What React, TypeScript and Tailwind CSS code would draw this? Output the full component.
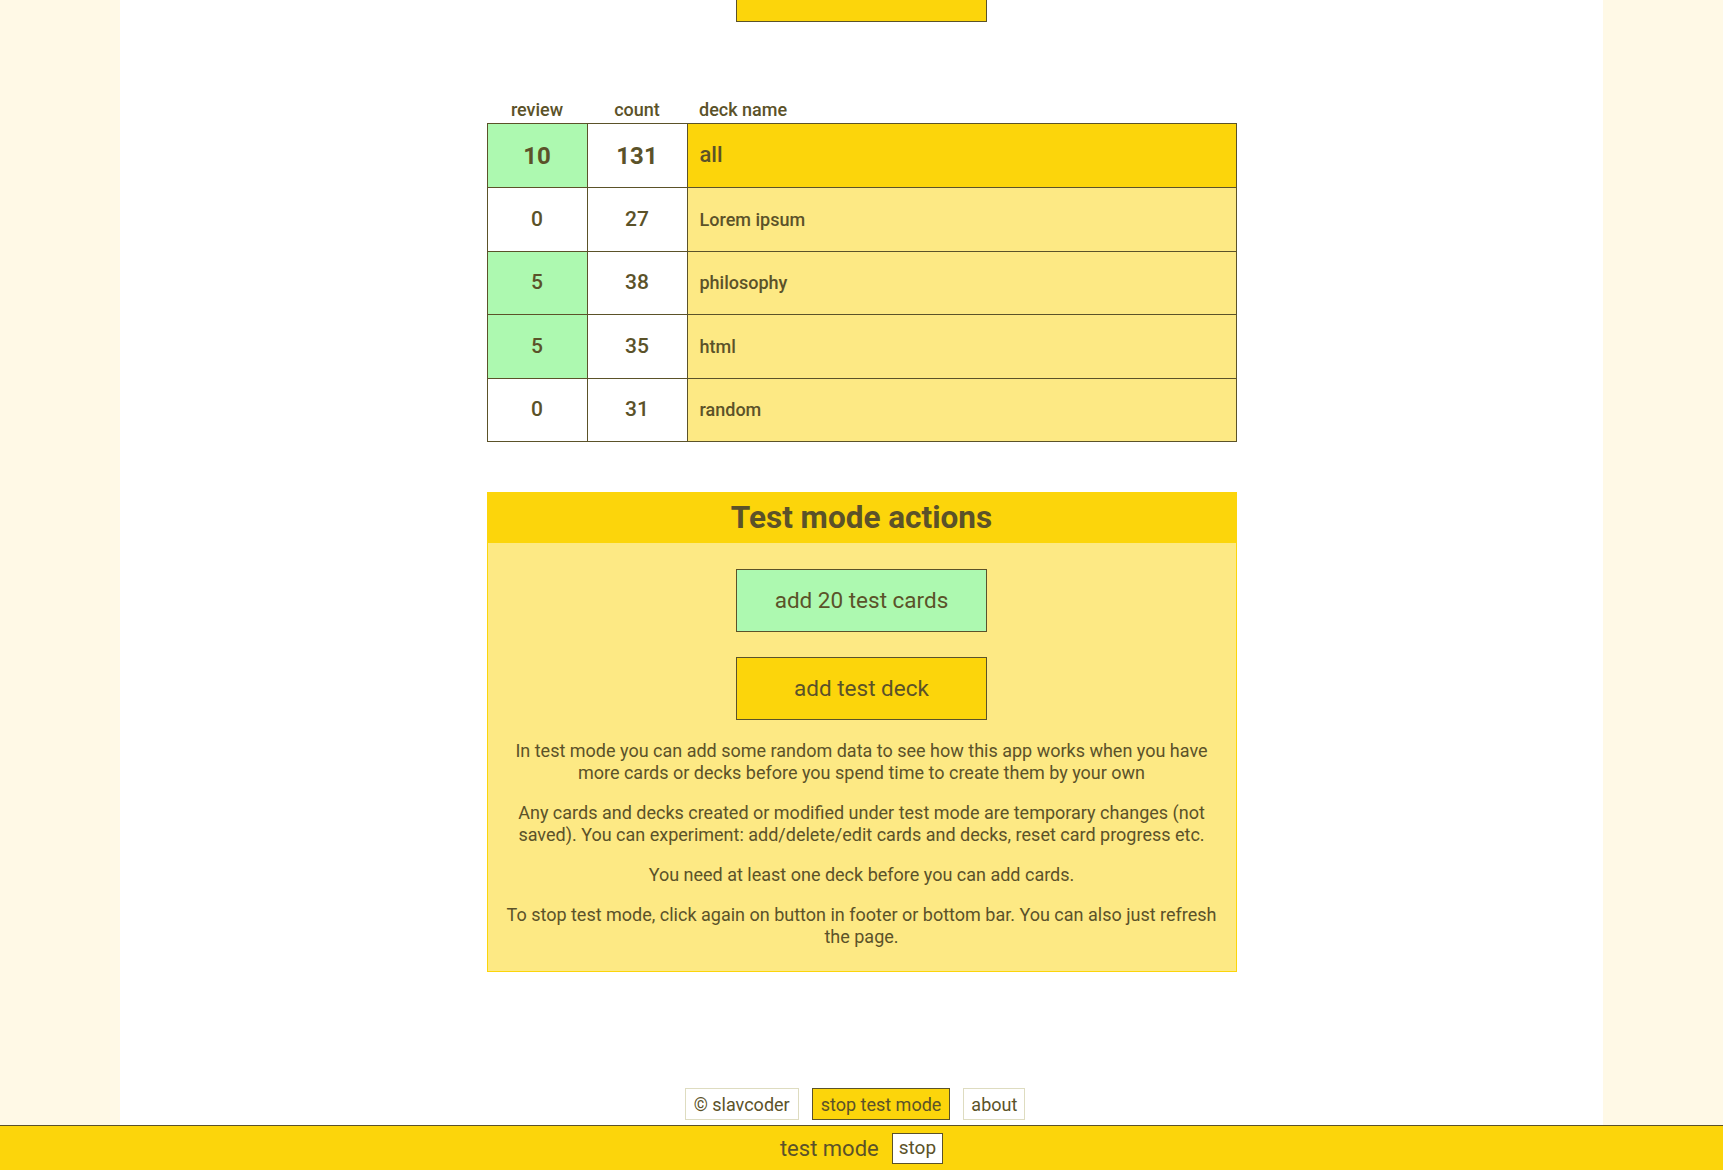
import React from "react";

const rows = [
  { review: 0, count: 27, name: "Lorem ipsum" },
  { review: 5, count: 38, name: "philosophy" },
  { review: 5, count: 35, name: "html" },
  { review: 0, count: 31, name: "random" },
];

export default function App() {
  return (
    <div
      className="min-h-screen flex flex-col bg-[#fff9e6] text-[#5b5229]"
      style={{ fontFamily: "Roboto, 'Noto Sans', sans-serif" }}
    >
      <div className="flex-1 w-[1483px] mx-auto bg-white flex flex-col items-center">
        <div className="w-[251px] h-[22px] bg-[#fcd50b] border-x border-b border-[#5b5229]" />

        <table className="mt-[74px] w-[750px] border-collapse">
          <thead>
            <tr className="h-[26px] text-[18px] font-medium">
              <th className="w-[100px] font-medium text-center align-middle">review</th>
              <th className="w-[100px] font-medium text-center align-middle">count</th>
              <th className="font-medium text-left pl-[12px] align-middle">deck name</th>
            </tr>
          </thead>
          <tbody>
            <tr className="h-[64px]">
              <td className="border border-[#5b5229] bg-[#adf9b0] text-center text-[24px] font-bold">10</td>
              <td className="border border-[#5b5229] bg-white text-center text-[24px] font-bold">131</td>
              <td className="border border-[#5b5229] bg-[#fcd50b] pl-[12px] pb-[2px] text-[22px] font-medium">all</td>
            </tr>
            {rows.map((r) => (
              <tr key={r.name} className="h-[63.5px]">
                <td
                  className={
                    "border border-[#5b5229] text-center text-[21px] font-medium " +
                    (r.review > 0 ? "bg-[#adf9b0]" : "bg-white")
                  }
                >
                  {r.review}
                </td>
                <td className="border border-[#5b5229] bg-white text-center text-[21px] font-medium">{r.count}</td>
                <td className="border border-[#5b5229] bg-[#fde984] pl-[12px] text-[18px] font-medium">{r.name}</td>
              </tr>
            ))}
          </tbody>
        </table>

        <div className="mt-[50px] w-[750px] border border-[#fcd50b] bg-[#fde984]">
          <div className="h-[50px] bg-[#fcd50b] flex items-center justify-center">
            <h2 className="text-[31.5px] font-bold leading-none">Test mode actions</h2>
          </div>
          <div className="flex flex-col items-center px-[16px] pt-[26px] pb-[23px]">
            <button className="w-[251px] h-[63px] bg-[#adf9b0] border border-[#5b5229] text-[22.5px]">
              add 20 test cards
            </button>
            <button className="mt-[25px] w-[251px] h-[63px] bg-[#fcd50b] border border-[#5b5229] text-[22.5px]">
              add test deck
            </button>
            <div className="mt-[20px] text-[18px] leading-[22px] text-center flex flex-col gap-[18px]">
              <p>
                In test mode you can add some random data to see how this app works when you have more cards or
                decks before you spend time to create them by your own
              </p>
              <p>
                Any cards and decks created or modified under test mode are temporary changes (not saved). You can
                experiment: add/delete/edit cards and decks, reset card progress etc.
              </p>
              <p>You need at least one deck before you can add cards.</p>
              <p>
                To stop test mode, click again on button in footer or bottom bar. You can also just refresh the
                page.
              </p>
            </div>
          </div>
        </div>

        <footer className="mt-auto mb-[5px] pr-[13px] flex items-center gap-[13px] text-[18px]">
          <span className="h-[32px] px-[8px] flex items-center border border-[#dedcc0] bg-white">© slavcoder</span>
          <button className="h-[32px] px-[8px] flex items-center border border-[#5b5229] bg-[#fcd50b]">
            stop test mode
          </button>
          <button className="h-[32px] px-[7px] flex items-center border border-[#dedcc0] bg-white">about</button>
        </footer>
      </div>

      <div className="h-[45px] border-t border-[#5b5229] bg-[#fcd50b] flex items-center justify-center gap-[13px]">
        <span className="text-[22px]">test mode</span>
        <button className="h-[31px] px-[6px] bg-white border border-[#5b5229] text-[19px] flex items-center">
          stop
        </button>
      </div>
    </div>
  );
}
